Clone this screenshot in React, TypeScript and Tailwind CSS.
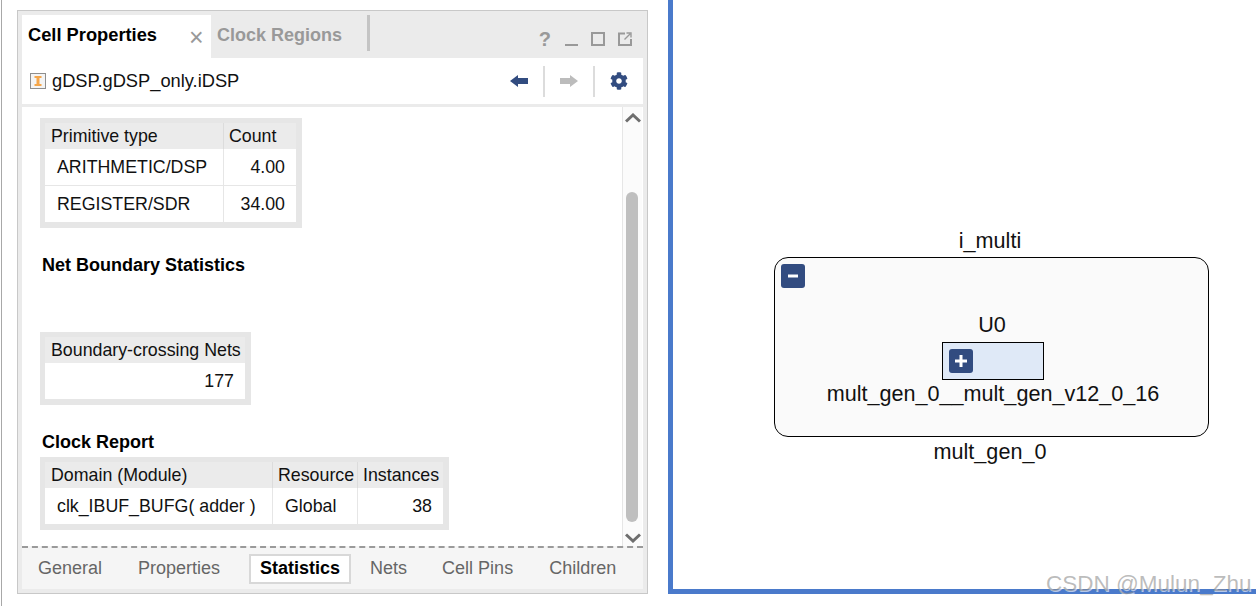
import React from "react";
import { FaCog } from "react-icons/fa";

const FONT = "font-['Liberation_Sans',Arial,sans-serif]";

const thClass =
  "h-[26px] pl-[6px] text-left font-normal bg-[#ebebeb] text-[17.8px] leading-[24px] text-[#111] whitespace-nowrap";
const thNext = "border-l border-[#dcdcdc] !pl-[5px]";
const tdClass = "pl-[12px] text-[17.8px] leading-[24px] text-[#111] whitespace-nowrap";
const tdNum = "pr-[11px] text-right text-[17.8px] leading-[24px] text-[#111]";

const BackIcon = () => (
  <svg width="18" height="14" viewBox="0 0 18 14">
    <path d="M0 7 L8 1 L8 4 L18 4 L18 10 L8 10 L8 13 Z" fill="#324c80" />
  </svg>
);

const ForwardIcon = () => (
  <svg width="18" height="14" viewBox="0 0 18 14">
    <path d="M18 7 L10 1 L10 4 L0 4 L0 10 L10 10 L10 13 Z" fill="#bcbcbc" />
  </svg>
);

const CellIcon = () => (
  <svg width="16" height="16" viewBox="0 0 16 16">
    <rect x="0.5" y="0.5" width="15" height="15" fill="#f4f4f4" stroke="#8e8e8e" />
    <path d="M4.5 3 H11.5 V5 H9.5 V11 H11.5 V13 H4.5 V11 H6.5 V5 H4.5 Z" fill="#f5a64a" />
  </svg>
);

const PopoutIcon = () => (
  <svg width="14" height="14" viewBox="0 0 14 14" fill="none" stroke="#999" strokeWidth="2">
    <path d="M7 1.5 H1 V13 H13 V7" />
    <path d="M6.5 7.5 L12 2 M8.5 1 H13 V5.5" strokeWidth="1.4" />
  </svg>
);

const Chevron = ({ down }: { down?: boolean }) => (
  <svg width="16" height="10" viewBox="0 0 16 10" fill="none" stroke="#6e6e6e" strokeWidth="3">
    <path d={down ? "M1 1.5 L8 8 L15 1.5" : "M1 8.5 L8 2 L15 8.5"} />
  </svg>
);

const Toggle = ({ plus }: { plus?: boolean }) => (
  <div className="w-6 h-6 rounded-[3px] bg-[#324c80] flex items-center justify-center">
    <svg width="14" height="14" viewBox="0 0 14 14" stroke="#fff" strokeWidth="3">
      <path d={plus ? "M1 7 H13 M7 1 V13" : "M2 7 H12"} />
    </svg>
  </div>
);

const PropertiesPanel = () => (
  <div className="mt-[10px] w-[631px] h-[584px] border border-[#c8c8c8] bg-[#ebebeb] p-[4px] flex flex-col">
    {/* tab strip */}
    <div className="h-[43px] flex shrink-0">
      <div className="w-[189px] bg-white flex items-start pt-[8px] pl-[6px] relative">
        <span className="font-bold text-[18.3px] leading-[24px] text-black whitespace-nowrap">Cell Properties</span>
        <span className="absolute left-[167px] top-[11px] text-[25px] leading-[22px] text-[#999]">×</span>
      </div>
      <div className="w-[156px] pl-[6px] pt-[8px] font-bold text-[18px] leading-[24px] text-[#999] whitespace-nowrap">
        Clock Regions
      </div>
      <div className="w-[3px] h-[36px] bg-[#c4c4c4]" />
      <div className="flex-1 flex items-center justify-end pt-[5px] pr-[11px] gap-[13px]">
        <span className="font-bold text-[20px] leading-[24px] text-[#999] mr-[1px]">?</span>
        <div className="w-[13px] h-[2px] bg-[#999] mt-[11px]" />
        <div className="w-[14px] h-[14px] border-2 border-[#999]" />
        <PopoutIcon />
      </div>
    </div>

    {/* toolbar */}
    <div className="h-[46px] bg-white flex items-center shrink-0 pl-[8px] pr-[15px]">
      <CellIcon />
      <span className="ml-[6px] text-[18.3px] text-[#111]">gDSP.gDSP_only.iDSP</span>
      <div className="ml-auto flex items-center">
        <BackIcon />
        <div className="w-[2px] h-[31px] bg-[#dcdcdc] mx-[15px]" />
        <ForwardIcon />
        <div className="w-[2px] h-[31px] bg-[#dcdcdc] mx-[15px]" />
        <FaCog className="text-[#324c80]" size={18} />
      </div>
    </div>

    {/* scrolling content */}
    <div className="mt-[3px] h-[440px] bg-white flex shrink-0">
      <div className="flex-1 pl-[18px] pt-[11px]">
        <div className="w-fit pl-[5px] pt-[5px] pr-[6px] pb-[6px] bg-[#e6e6e6]">
          <table className="w-[251px] table-fixed border-separate border-spacing-0 bg-white">
            <thead>
              <tr>
                <th className={`${thClass} w-[178px]`}>Primitive type</th>
                <th className={`${thClass} ${thNext}`}>Count</th>
              </tr>
            </thead>
            <tbody>
              <tr>
                <td className={`${tdClass} h-[36px]`}>ARITHMETIC/DSP</td>
                <td className={`${tdNum} h-[36px] border-l border-[#e6e6e6]`}>4.00</td>
              </tr>
              <tr>
                <td className={`${tdClass} h-[37px] border-t border-[#e6e6e6]`}>REGISTER/SDR</td>
                <td className={`${tdNum} h-[37px] border-l border-t border-[#e6e6e6]`}>34.00</td>
              </tr>
            </tbody>
          </table>
        </div>

        <h3 className="mt-[27px] ml-[2px] font-bold text-[18px] leading-[20px] text-black">Net Boundary Statistics</h3>

        <div className="mt-[57px] w-fit pl-[5px] pt-[5px] pr-[6px] pb-[6px] bg-[#e6e6e6]">
          <table className="w-[200px] table-fixed border-separate border-spacing-0 bg-white">
            <thead>
              <tr>
                <th className={thClass}>Boundary-crossing Nets</th>
              </tr>
            </thead>
            <tbody>
              <tr>
                <td className={`${tdNum} h-[36px]`}>177</td>
              </tr>
            </tbody>
          </table>
        </div>

        <h3 className="mt-[27px] ml-[2px] font-bold text-[18px] leading-[20px] text-black">Clock Report</h3>

        <div className="mt-[5px] w-fit pl-[5px] pt-[5px] pr-[6px] pb-[6px] bg-[#e6e6e6]">
          <table className="w-[398px] table-fixed border-separate border-spacing-0 bg-white">
            <thead>
              <tr>
                <th className={`${thClass} w-[227px]`}>Domain (Module)</th>
                <th className={`${thClass} ${thNext} w-[85px]`}>Resource</th>
                <th className={`${thClass} ${thNext}`}>Instances</th>
              </tr>
            </thead>
            <tbody>
              <tr>
                <td className={`${tdClass} h-[36px]`}>clk_IBUF_BUFG( adder )</td>
                <td className={`${tdClass} h-[36px] border-l border-[#e6e6e6]`}>Global</td>
                <td className={`${tdNum} h-[36px] border-l border-[#e6e6e6]`}>38</td>
              </tr>
            </tbody>
          </table>
        </div>
      </div>

      {/* scrollbar */}
      <div className="w-[20px] mr-[1px] bg-[#fbfbfb] border-l border-[#e6e6e6] flex flex-col items-center">
        <div className="mt-[6px]">
          <Chevron />
        </div>
        <div className="mt-[69px] -ml-[1px] w-[12px] h-[330px] rounded-[6px] bg-[#bfbfbf]" />
        <div className="mt-[11px]">
          <Chevron down />
        </div>
      </div>
    </div>

    {/* bottom tabs */}
    <div className="flex-1 bg-[#f5f5f5] border-t-2 border-dashed border-[#9a9a9a] -mt-[1px] flex items-center pl-[16px] text-[18px] text-[#666]">
      <span>General</span>
      <span className="ml-[36px]">Properties</span>
      <span className="ml-[29px] w-[102px] h-[30px] flex items-center justify-center border-2 border-[#d8d8d8] bg-white font-bold text-black">
        Statistics
      </span>
      <span className="ml-[19px]">Nets</span>
      <span className="ml-[35px]">Cell Pins</span>
      <span className="ml-[36px]">Children</span>
    </div>
  </div>
);

const Diagram = () => (
  <div className="flex-1 h-[594px] border-l-[5px] border-b-[5px] border-[#4a7acb] bg-white pl-[101px] pt-[229px]">
    <div className="w-[435px] flex flex-col items-center text-[21.6px] leading-[24px] text-[#111]">
      <span className="-ml-[3px]">i_multi</span>
      <div className="mt-[4px] w-full h-[180px] rounded-[14px] border border-black bg-[#fafafa] flex flex-col items-center relative">
        <div className="absolute left-[6px] top-[6px]">
          <Toggle />
        </div>
        <span className="mt-[55px] ml-[1px]">U0</span>
        <div className="mt-[5px] ml-[3px] w-[102px] h-[38px] border border-black bg-[#dfe9f7] pl-[6px] pt-[6px]">
          <Toggle plus />
        </div>
        <span className="mt-[2px] whitespace-nowrap ml-[3px]">mult_gen_0__mult_gen_v12_0_16</span>
      </div>
      <span className="mt-[3px] -ml-[3px]">mult_gen_0</span>
    </div>
  </div>
);

export default function App() {
  return (
    <div className={`${FONT} relative w-[1256px] h-[606px] bg-white overflow-hidden flex`}>
      <div className="w-[17px] shrink-0">
        <div className="ml-[1px] w-[1px] h-full bg-[#a8a8a8]" />
      </div>
      <PropertiesPanel />
      <div className="w-[20px] shrink-0" />
      <Diagram />
      {/* watermark */}
      <span className="absolute left-[1046px] top-[571px] text-[22.5px] leading-[26px] text-[#8f8f8f]/60 [text-shadow:1px_1px_0_rgba(255,255,255,0.6)] whitespace-nowrap">
        CSDN @Mulun_Zhu
      </span>
    </div>
  );
}
